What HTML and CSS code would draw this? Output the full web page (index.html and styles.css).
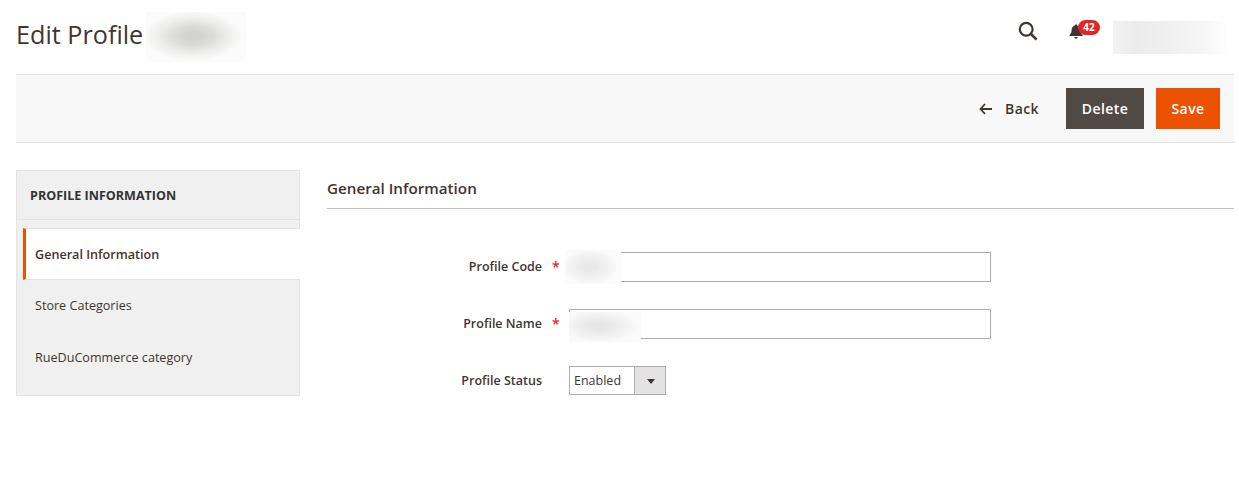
FILE: index.html
```html
<!DOCTYPE html>
<html lang="en">
<head>
<meta charset="utf-8">
<title>Edit Profile</title>
<link rel="stylesheet" href="styles.css">
</head>
<body>
<div class="page">
  <header class="header">
    <div class="title-group">
      <h1 class="title">Edit Profile</h1>
      <div class="smudge smudge-title"></div>
    </div>
    <div class="actions">
      <svg class="search" width="22" height="22" viewBox="0 0 22 22" aria-hidden="true"><circle cx="9.2" cy="9.2" r="6.4" fill="none" stroke="#41362f" stroke-width="2.2"/><path d="M14 14l5.6 5.6" fill="none" stroke="#41362f" stroke-width="2.6"/></svg>
      <div class="bell-wrap">
        <svg class="bell" width="16" height="17" viewBox="0 0 16 17" aria-hidden="true"><path d="M8 1.5c-.8 0-1.3.5-1.3 1.1C4.6 3.2 3.6 5 3.6 7c0 2.600-.8 3.800-2.100 5v.9h13v-.9c-1.300-1.200-2.100-2.400-2.100-5 0-2-1-3.800-3.100-4.400C9.300 2 8.800 1.500 8 1.500zM6.300 14c0 1 .7 1.700 1.700 1.700s1.700-.7 1.700-1.700z" fill="#41362f"/></svg>
        <span class="badge">42</span>
      </div>
      <div class="smudge smudge-user"></div>
    </div>
  </header>
  <div class="toolbar">
    <a class="back"><svg width="14" height="12" viewBox="0 0 14 12" aria-hidden="true"><path d="M6 1L1.500 6 6 11M1.500 6H13" fill="none" stroke="#41362f" stroke-width="1.800"/></svg><span>Back</span></a>
    <button class="btn btn-delete">Delete</button>
    <button class="btn btn-save">Save</button>
  </div>
  <main class="main">
    <aside class="side">
      <div class="side-title">PROFILE INFORMATION</div>
      <nav class="side-nav">
        <a class="side-item active">General Information</a>
        <a class="side-item">Store Categories</a>
        <a class="side-item item-last">RueDuCommerce category</a>
      </nav>
    </aside>
    <section class="content">
      <h2 class="section-title">General Information</h2>
      <form class="form">
        <div class="row">
          <label class="label">Profile Code</label><span class="req">*</span>
          <div class="field"><input class="input" type="text"><div class="smudge smudge-code"></div></div>
        </div>
        <div class="row">
          <label class="label">Profile Name</label><span class="req">*</span>
          <div class="field"><input class="input" type="text"><div class="smudge smudge-name"></div></div>
        </div>
        <div class="row">
          <label class="label">Profile Status</label><span class="req"></span>
          <div class="select"><span class="select-value">Enabled</span><span class="select-arrow"></span></div>
        </div>
      </form>
    </section>
  </main>
</div>
</body>
</html>
```
FILE: styles.css
```css
* { box-sizing: border-box; }
html, body { margin: 0; padding: 0; background: #fff; }
body { font-family: "Open Sans", sans-serif; color: #41362f; height: 478px; overflow: hidden; }
.page { padding: 0 5px 0 16px; }
.header { height: 74px; display: flex; justify-content: space-between; align-items: flex-start; }
.title-group { position: relative; }
.title { margin: 19px 0 0; font-size: 25.200px; line-height: 30px; font-weight: 400; color: #41362f; }
.actions { display: flex; align-items: flex-start; position: relative; width: 216px; height: 74px; }
.search { position: absolute; left: -1px; top: 20px; }
.bell-wrap { position: absolute; left: 50px; top: 20px; width: 34px; height: 20px; }
.bell { position: absolute; left: 0; top: 3px; }
.badge { position: absolute; left: 10px; top: 0; width: 22px; height: 15px; border-radius: 8px; background: #e22626; color: #fff; font-size: 10px; font-weight: 700; line-height: 15px; text-align: center; }
.smudge { position: absolute; pointer-events: none; }
.smudge-title { left: 130px; top: 12px; width: 100px; height: 50px; background: radial-gradient(ellipse 50px 25px at 47px 24px, #d3d3d1 15%, #dcdcdb 40%, #eeeeed 70%, #fbfbfb 100%); }
.smudge-user { left: 95px; top: 21px; width: 113px; height: 33px; background: linear-gradient(90deg, #f3f3f3 0, #ebebeb 20%, #f0f0f0 50%, #f6f6f6 80%, #fdfdfd 100%); }
.toolbar { height: 69px; background: #f8f8f8; border-top: 1px solid #e3e3e3; border-bottom: 1px solid #e3e3e3; display: flex; justify-content: flex-end; align-items: center; padding-right: 14px; margin-top: 0; }
.back { display: flex; align-items: center; gap: 12px; font-size: 14px; font-weight: 600; letter-spacing: .4px; color: #41362f; margin-right: 27px; }
.btn { height: 41px; border: 0; font-family: inherit; font-size: 14px; font-weight: 600; letter-spacing: .4px; color: #fff; padding: 0; }
.btn-delete { width: 78px; background: #514943; margin-right: 12px; }
.btn-save { width: 64px; background: #eb5202; }
.main { display: flex; margin-top: 27px; }
.side { width: 284px; height: 226px; background: #f0f0f0; border: 1px solid #e3e3e3; flex: none; }
.side-title { height: 49px; border-bottom: 1px solid #e3e3e3; padding-left: 13px; font-size: 12.550px; font-weight: 700; line-height: 49px; color: #333; }
.side-nav { margin-top: 8px; padding-left: 6px; }
.side-item { display: block; height: 51.500px; padding-left: 12px; font-size: 12.600px; line-height: 52px; color: #41362f; }
.side-item.active { background: #fff; border-left: 3px solid #eb5202; padding-left: 9px; font-weight: 600; margin-right: -1px; border-top: 1px solid #e3e3e3; border-bottom: 1px solid #e3e3e3; line-height: 51px; }
.item-last { line-height: 54px; }
.content { flex: 1; margin-left: 27px; }
.section-title { margin: 0; height: 39px; border-bottom: 1px solid #c4c2bd; font-size: 15.200px; font-weight: 600; line-height: 37px; color: #41362f; }
.form { padding-top: 43px; }
.row { display: flex; align-items: flex-start; height: 31px; margin-bottom: 26px; }
.label { width: 215px; margin-right: 1px; text-align: right; font-size: 12.500px; font-weight: 600; line-height: 30px; color: #41362f; }
.req { width: 26px; padding-left: 9px; color: #e22626; font-size: 14px; font-weight: 600; line-height: 30px; flex: none; }
.field { position: relative; width: 422px; height: 30px; }
.input { display: block; width: 100%; height: 100%; border: 1px solid #adadad; background: #fff; padding: 0 10px; font: inherit; }
.smudge-code { left: -4px; top: -2px; width: 56px; height: 34px; background: radial-gradient(ellipse 28px 18px at 25px 17px, #e8e8e8 20%, #f3f3f3 70%, #fbfbfb 100%); }
.smudge-name { left: 0; top: 3px; width: 72px; height: 30px; background: radial-gradient(ellipse 40px 17px at 30px 14px, #e6e6e6 20%, #f3f3f3 70%, #fbfbfb 100%); }
.select { width: 97px; height: 29px; border: 1px solid #adadad; display: flex; background: #fff; }
.select-value { width: 64px; padding-left: 4px; font-size: 12.500px; line-height: 27px; color: #41362f; }
.select-arrow { flex: 1; background: #e3e3e3; border-left: 1px solid #adadad; position: relative; }
.select-arrow::after { content: ""; position: absolute; left: 12px; top: 12px; border-style: solid; border-width: 5px 4px 0; border-color: #41362f transparent transparent; }
```
